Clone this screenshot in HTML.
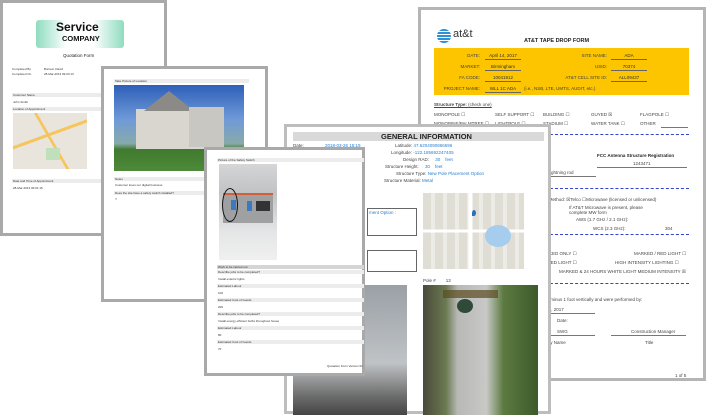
<!DOCTYPE html>
<html><head><style>
*{margin:0;padding:0;box-sizing:border-box}
body{width:706px;height:407px;background:#fff;position:relative;overflow:hidden;font-family:"Liberation Sans",sans-serif}
.d{position:absolute;background:#fff;border:3px solid #a9a9a9}
.a{position:absolute}
.t{position:absolute;font-size:3px;color:#333;white-space:nowrap}
.bar{position:absolute;background:#ececec;height:4px}
.s{position:absolute;font-size:4.5px;color:#444;white-space:nowrap}
.r{position:absolute;font-size:4.5px;color:#444;white-space:nowrap;text-align:right}
.v{position:absolute;font-size:4.5px;color:#333;white-space:nowrap;text-align:center;border-bottom:1px solid #666;padding-bottom:1px}
.b{color:#2a7fd0}
.ln{position:absolute;border-bottom:1px solid #777}
.dash{position:absolute;border-top:1px dashed #3344cc;height:0}
</style></head><body>

<!-- AT&T doc -->
<div class="d" style="left:418px;top:7px;width:288px;height:374px;border-color:#b5b5b5">
 <div class="a" style="left:16px;top:19px;width:14px;height:14px;border-radius:50%;background:repeating-linear-gradient(#2d8fd6 0 2px,#fff 2px 3px)"></div>
 <div class="a" style="left:32px;top:18px;font-size:11px;color:#333">at&amp;t</div>
 <div class="a" style="left:103px;top:28px;font-size:5.5px;font-weight:bold;color:#222">AT&amp;T TAPE DROP FORM</div>
 <div class="a" style="left:13px;top:38px;width:255px;height:47px;background:#fcc500"></div>
 <div class="r" style="left:0;width:59px;top:43px">DATE:</div><div class="v" style="left:64px;width:36px;top:43px">April 14, 2017</div>
 <div class="r" style="left:0;width:59px;top:54px">MARKET:</div><div class="v" style="left:64px;width:36px;top:54px">Birmingham</div>
 <div class="r" style="left:0;width:59px;top:65px">FA CODE:</div><div class="v" style="left:64px;width:36px;top:65px">10041912</div>
 <div class="r" style="left:0;width:59px;top:76px">PROJECT NAME:</div><div class="v" style="left:64px;width:36px;top:76px">WLL 1C ADA</div><div class="s" style="left:103px;top:76px">(i.e., NSB, LTE, UMTS, AUDIT, etc.)</div>
 <div class="r" style="left:100px;width:86px;top:43px">SITE NAME:</div><div class="v" style="left:190px;width:36px;top:43px">ADA</div>
 <div class="r" style="left:100px;width:86px;top:54px">USID:</div><div class="v" style="left:190px;width:36px;top:54px">70374</div>
 <div class="r" style="left:100px;width:86px;top:65px">AT&amp;T CELL SITE ID:</div><div class="v" style="left:190px;width:36px;top:65px">ALL09437</div>
 <div class="s" style="left:13px;top:92px;text-decoration:underline;font-weight:bold">Structure Type: <span style="font-weight:normal;text-decoration:none">(check one)</span></div>
 <div class="s" style="left:13px;top:102px">MONOPOLE ☐</div><div class="s" style="left:74px;top:102px">SELF SUPPORT ☐</div><div class="s" style="left:122px;top:102px">BUILDING ☐</div><div class="s" style="left:170px;top:102px">GUYED ☒</div><div class="s" style="left:219px;top:102px">FLAGPOLE ☐</div>
 <div class="s" style="left:13px;top:111px">MONOPINE/PALMTREE ☐</div><div class="s" style="left:74px;top:111px">LIGHTPOLE ☐</div><div class="s" style="left:122px;top:111px">STADIUM ☐</div><div class="s" style="left:170px;top:111px">WATER TANK ☐</div><div class="s" style="left:219px;top:111px">OTHER</div>
 <div class="ln" style="left:240px;top:117px;width:27px"></div>
 <div class="dash" style="left:13px;top:124px;width:255px"></div>
 <div class="s" style="left:176px;top:143px;font-weight:bold;color:#222">FCC Antenna Structure Registration</div>
 <div class="s" style="left:212px;top:151px">1243471</div>
 <div class="ln" style="left:176px;top:157px;width:90px"></div>
 <div class="s" style="left:128px;top:160px">lightning rod</div>
 <div class="ln" style="left:110px;top:166px;width:65px"></div>
 <div class="dash" style="left:13px;top:178px;width:255px"></div>
 <div class="s" style="left:118px;top:187px">nect Method: ☒Telco ☐Microwave (licensed or unlicensed)</div>
 <div class="s" style="left:148px;top:195px">If AT&amp;T Microwave is present, please</div>
 <div class="s" style="left:148px;top:200px">complete MW form</div>
 <div class="s" style="left:155px;top:207px">AWS (1.7 GHz / 2.1 GHz):</div>
 <div class="s" style="left:172px;top:216px">WCS (2.3 GHz):</div><div class="s" style="left:244px;top:216px">304</div>
 <div class="dash" style="left:13px;top:224px;width:255px"></div>
 <div class="s" style="left:118px;top:241px">MARKED ONLY ☐</div><div class="s" style="left:213px;top:241px">MARKED / RED LIGHT ☐</div>
 <div class="s" style="left:118px;top:250px">E &amp; RED LIGHT ☐</div><div class="s" style="left:194px;top:250px">HIGH INTENSITY LIGHTING ☐</div>
 <div class="s" style="left:138px;top:259px">MARKED &amp; 24 HOURS WHITE LIGHT MEDIUM INTENSITY ☒</div>
 <div class="dash" style="left:13px;top:273px;width:255px"></div>
 <div class="s" style="left:118px;top:287px">us or minus 1 foot vertically and were performed by:</div>
 <div class="s" style="left:118px;top:297px">pril 14, 2017</div><div class="ln" style="left:116px;top:303px;width:58px"></div>
 <div class="s" style="left:136px;top:308px">Date:</div>
 <div class="s" style="left:136px;top:319px">SWG</div><div class="s" style="left:210px;top:319px">Construction Manager</div>
 <div class="ln" style="left:116px;top:325px;width:58px"></div><div class="ln" style="left:190px;top:325px;width:75px"></div>
 <div class="s" style="left:118px;top:330px">mpany Name</div><div class="s" style="left:224px;top:330px">Title</div>
 <div class="s" style="left:254px;top:363px">1 of 5</div>
</div>

<!-- General info doc -->
<div class="d" style="left:284px;top:124px;width:267px;height:290px;border-color:#bdbdbd">
 <div class="a" style="left:6px;top:5px;width:251px;height:9px;background:#d9d9d9"></div>
 <div class="a" style="left:94px;top:5px;font-size:7.5px;font-weight:bold;color:#222">GENERAL INFORMATION</div>
 <div class="s" style="left:6px;top:16px">Date:</div><div class="s b" style="left:38px;top:16px">2018-03-26 15:19</div>
 <div class="s" style="left:108px;top:16px">Latitude: <span class="b">47.6204090866596</span></div>
 <div class="s" style="left:104px;top:23px">Longitude: <span class="b">-122.185692247405</span></div>
 <div class="s" style="left:116px;top:30px">Design RAD: <span class="b">&nbsp;&nbsp;&nbsp;&nbsp;30 &nbsp;&nbsp;&nbsp;feet</span></div>
 <div class="s" style="left:98px;top:37px">Structure Height: <span class="b">&nbsp;&nbsp;&nbsp;&nbsp;30 &nbsp;&nbsp;&nbsp;feet</span></div>
 <div class="s" style="left:109px;top:44px">Structure Type: <span class="b">New Pole Placement Option</span></div>
 <div class="s" style="left:58px;top:51px"><span class="b">105feet</span></div><div class="s" style="left:97px;top:51px">Structure Material: <span class="b">Metal</span></div>
 <div class="s b" style="left:82px;top:83px">ment Option :</div>
 <div class="a" style="left:80px;top:81px;width:50px;height:28px;border:1px solid #666"></div>
 <div class="a" style="left:80px;top:123px;width:50px;height:22px;border:1px solid #666"></div>
 <div class="a" style="left:136px;top:66px;width:101px;height:76px;background:#ececE6;background-image:linear-gradient(90deg,transparent 45%,#fff 45% 49%,transparent 49%),linear-gradient(transparent 48%,#fff 48% 52%,transparent 52%),repeating-linear-gradient(90deg,#e0ddd5 0 8px,#ecebe5 8px 12px)"></div>
 <div class="a" style="left:198px;top:98px;width:26px;height:22px;border-radius:50%;background:#a6cdee"></div>
 <div class="a" style="left:185px;top:83px;width:4px;height:6px;border-radius:50% 50% 50% 0;background:#2a6fc0"></div>
 <div class="s" style="left:136px;top:151px">Pole # &nbsp;&nbsp;&nbsp;&nbsp;&nbsp;&nbsp;&nbsp;13</div>
 <div class="a" style="left:6px;top:158px;width:114px;height:130px;background:linear-gradient(#9aa0a6,#bfc3c6 60%,#6e6e6e 85%,#444)"></div>
 <div class="a" style="left:136px;top:158px;width:115px;height:130px;background:linear-gradient(90deg,#4a4a3a,#6b7a52 20%,#b8b9b6 30%,#c8c9c6 55%,#5c7a40 70%,#3c5a2a)"></div>
 <div class="a" style="left:170px;top:172px;width:16px;height:14px;border-radius:50%;background:#2f4a38"></div>
 <div class="a" style="left:156px;top:163px;width:55px;height:8px;background:#5a4a20;opacity:.7"></div>
</div>

<!-- Service doc -->
<div class="d" style="left:0;top:0;width:167px;height:236px">
 <div class="a" style="left:33px;top:17px;width:88px;height:28px;border-radius:3px;background:linear-gradient(90deg,#8fdcc0,#fff 35%,#fff 65%,#8fdcc0)"></div>
 <div class="a" style="left:53px;top:17px;font-size:12px;font-weight:bold;color:#111;font-family:'Liberation Sans Narrow','Liberation Sans',sans-serif">Service</div>
 <div class="a" style="left:59px;top:31px;font-size:7.5px;font-weight:bold;color:#111">COMPANY</div>
 <div class="a" style="left:60px;top:50px;font-size:4.5px;color:#222">Quotation Form</div>
 <div class="t" style="left:9px;top:64px">Completed By</div><div class="t" style="left:41px;top:64px">Burnett, David</div>
 <div class="t" style="left:9px;top:69px">Completed On</div><div class="t" style="left:41px;top:69px">28-Mar-2013 09:03:13</div>
 <div class="bar" style="left:9px;top:90px;width:150px"></div><div class="t" style="left:10px;top:90px">Customer Name</div>
 <div class="t" style="left:10px;top:97px">John Smith</div>
 <div class="bar" style="left:9px;top:104px;width:150px"></div><div class="t" style="left:10px;top:104px">Location of Appointment</div>
 <div class="a" style="left:10px;top:110px;width:74px;height:56px;background:#e9e5dc;background-image:linear-gradient(160deg,transparent 40%,#f5c660 40% 44%,transparent 44%),linear-gradient(60deg,transparent 50%,#f5c660 50% 53%,transparent 53%)"></div>
 <div class="a" style="left:43px;top:145px;width:14px;height:12px;background:#bfe0bb"></div>
 <div class="bar" style="left:9px;top:176px;width:150px"></div><div class="t" style="left:10px;top:176px">Date and Time of Appointment</div>
 <div class="t" style="left:10px;top:183px">28-Mar-2013 09:01:15</div>
</div>

<!-- House doc -->
<div class="d" style="left:101px;top:66px;width:167px;height:236px">
 <div class="bar" style="left:10px;top:10px;width:135px"></div><div class="t" style="left:11px;top:10px">Take Picture of Location</div>
 <div class="a" style="left:10px;top:16px;width:130px;height:86px;background:linear-gradient(#2e5fb8,#6f9ad8 40%,#8aa 68%,#3f7a2e 75%,#4f8a3a)"></div>
 <div class="a" style="left:32px;top:40px;width:68px;height:40px;background:#d8d6cf"></div>
 <div class="a" style="left:40px;top:22px;width:0;height:0;border-left:25px solid transparent;border-right:25px solid transparent;border-bottom:20px solid #8c8a86"></div>
 <div class="a" style="left:85px;top:38px;width:35px;height:40px;background:#c9c7c1"></div>
 <div class="bar" style="left:10px;top:108px;width:135px"></div><div class="t" style="left:11px;top:108px">Notes</div>
 <div class="t" style="left:11px;top:114px">Customer loves our digital business</div>
 <div class="bar" style="left:10px;top:122px;width:135px"></div><div class="t" style="left:11px;top:122px">Does the site have a safety switch installed?</div>
 <div class="t" style="left:11px;top:128px">Y</div>
</div>

<!-- Safety switch doc -->
<div class="d" style="left:204px;top:147px;width:161px;height:229px">
 <div class="bar" style="left:10px;top:8px;width:147px"></div><div class="t" style="left:11px;top:8px">Picture of the Safety Switch</div>
 <div class="a" style="left:12px;top:14px;width:58px;height:96px;background:linear-gradient(#d4d6d8,#c0c2c4 30%,#e4e5e6 70%,#f0f0f0)"></div>
 <div class="a" style="left:16px;top:43px;width:50px;height:30px;background:#9ea0a2"></div>
 <div class="a" style="left:16px;top:43px;width:50px;height:2px;background:#d0603a"></div>
 <div class="a" style="left:24px;top:50px;width:5px;height:10px;background:#3a7ac0"></div>
 <div class="a" style="left:40px;top:51px;width:5px;height:10px;background:#3a7ac0"></div>
 <div class="a" style="left:49px;top:51px;width:14px;height:10px;background:#333"></div>
 <div class="a" style="left:15px;top:38px;width:16px;height:34px;border:1px solid #111;border-radius:50%"></div>
 <div class="a" style="left:10px;top:115px;width:147px;height:4px;background:#d5d5d5"></div><div class="t" style="left:11px;top:115px">Work to be carried out</div>
 <div class="bar" style="left:10px;top:120px;width:147px"></div><div class="t" style="left:11px;top:120px">Describe jobs to be completed?</div>
 <div class="t" style="left:11px;top:127px">Install exterior lights</div>
 <div class="bar" style="left:10px;top:134px;width:147px"></div><div class="t" style="left:11px;top:134px">Estimated Labour</div>
 <div class="t" style="left:11px;top:141px">100</div>
 <div class="bar" style="left:10px;top:148px;width:147px"></div><div class="t" style="left:11px;top:148px">Estimated Cost of Goods</div>
 <div class="t" style="left:11px;top:155px">200</div>
 <div class="bar" style="left:10px;top:162px;width:147px"></div><div class="t" style="left:11px;top:162px">Describe jobs to be completed?</div>
 <div class="t" style="left:11px;top:169px">Install energy efficient bulbs throughout house</div>
 <div class="bar" style="left:10px;top:176px;width:147px"></div><div class="t" style="left:11px;top:176px">Estimated Labour</div>
 <div class="t" style="left:11px;top:183px">80</div>
 <div class="bar" style="left:10px;top:190px;width:147px"></div><div class="t" style="left:11px;top:190px">Estimated Cost of Goods</div>
 <div class="t" style="left:11px;top:197px">70</div>
 <div class="t" style="left:120px;top:214px">Quotation Form Version 01</div>
</div>
</body></html>
